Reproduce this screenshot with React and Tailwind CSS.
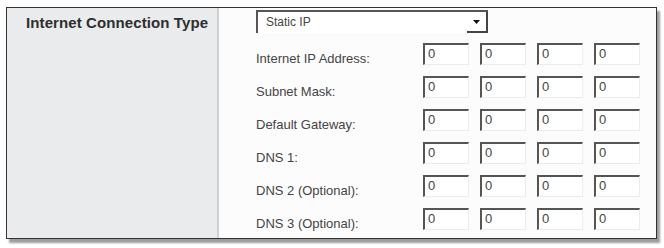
import React from "react"

const rows = [
    "Internet IP Address:",
    "Subnet Mask:",
    "Default Gateway:",
    "DNS 1:",
    "DNS 2 (Optional):",
    "DNS 3 (Optional):",
]

function Octet() {
    return (
        <div className="w-[46px] h-[22px] bg-white border-t-2 border-l-2 border-r border-b border-t-[#555] border-l-[#555] border-r-[#ececec] border-b-[#ececec] pl-[3px] text-[13px] leading-[18px] text-[#444]">
            0
        </div>
    )
}

export default function App() {
    return (
        <div className="w-[664px] h-[248px] bg-white pt-[7px] pl-[6px]" style={{fontFamily: '"Liberation Sans", Arial, sans-serif'}}>
            <div className="w-[651px] h-[232px] border border-[#333] shadow-[3px_4px_2px_#9c9c9c] flex">
                <div className="w-[212px] shrink-0 bg-[#e9ebec] border-r-2 border-[#cfd1d2] pl-[19px] pt-[6px]">
                    <p className="text-[15px] leading-[18px] font-bold text-[#2e2e2e] tracking-[0.1px]">Internet Connection Type</p>
                </div>
                <div className="flex-1 bg-[#fcfcfc] pl-[37px] pt-[2px]">
                    <div className="w-[232px] h-[23px] flex border-t-2 border-l-2 border-[#555] bg-white">
                        <div className="flex-1 pl-[8px] text-[12px] leading-[20px] text-[#444]">Static IP</div>
                        <div className="w-[21px] h-[21px] flex items-center justify-center border-r-2 border-b-2 border-[#444]">
                            <svg width="7" height="4" viewBox="0 0 7 4">
                                <path d="M0 0 L7 0 L3.5 4 Z" fill="#111" />
                            </svg>
                        </div>
                    </div>
                    <div className="flex flex-col gap-[11px] mt-[10px]">
                        {rows.map(label =>
                            <div key={label} className="flex items-start h-[22px]">
                                <div className="w-[167px] pt-[8px] text-[13px] leading-[16px] text-[#444]">{label}</div>
                                <div className="flex gap-[11px]">
                                    <Octet />
                                    <Octet />
                                    <Octet />
                                    <Octet />
                                </div>
                            </div>
                        )}
                    </div>
                </div>
            </div>
        </div>
    )
}
